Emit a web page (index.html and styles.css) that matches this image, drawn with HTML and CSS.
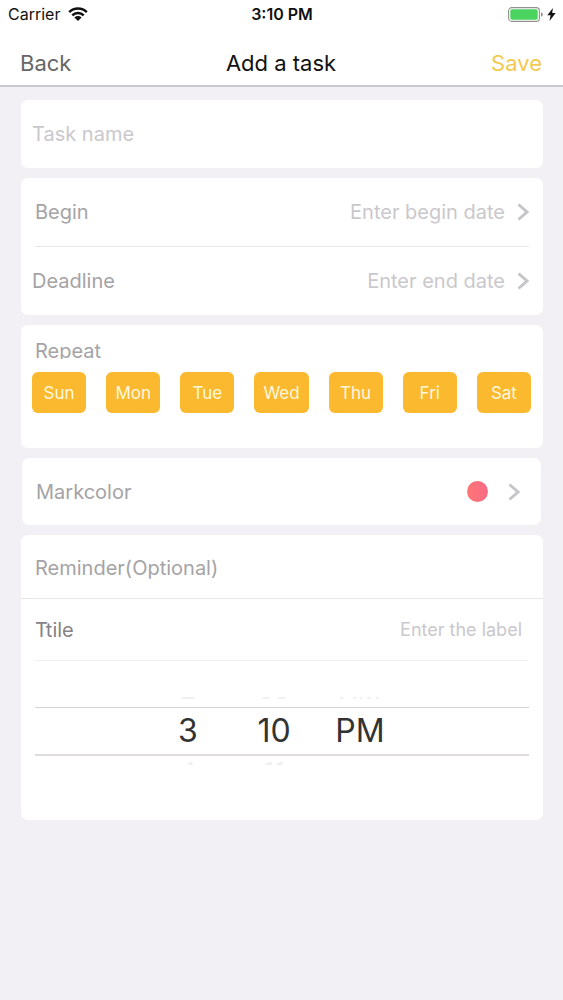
FILE: index.html
```html
<!DOCTYPE html>
<html lang="en">
<head>
<meta charset="utf-8">
<meta name="viewport" content="width=device-width, initial-scale=1">
<title>Add a task</title>
<link rel="stylesheet" href="styles.css">
</head>
<body>
<header class="top">
  <div class="status">
    <div class="carrier">
      <span>Carrier</span>
      <svg class="wifi" viewBox="0 0 20 14" aria-hidden="true">
        <path d="M1.2 5.2a12.4 12.4 0 0 1 17.6 0M4.3 8.4a8 8 0 0 1 11.4 0" fill="none" stroke="currentColor" stroke-width="2.5"/>
        <path d="M6.4 10.4a5.1 5.1 0 0 1 7.2 0L10 14z" fill="currentColor"/>
      </svg>
    </div>
    <time class="clock">3:10 PM</time>
    <div class="power">
      <svg class="battery" viewBox="0 0 36 15" aria-hidden="true">
        <rect x=".6" y=".6" width="30.8" height="13.8" rx="3.2" fill="#fff" stroke="#909290" stroke-width="1.1"/>
        <rect x="2.3" y="2.3" width="27.4" height="10.4" rx="1.6" fill="#4bd35f"/>
        <path d="M33 5.3q2 .7 2 2.2t-2 2.2z" fill="#909290"/>
      </svg>
      <svg class="bolt" viewBox="0 0 9 13" aria-hidden="true"><path d="M5.9 0L.3 7.2h3.3L2.5 13l6.2-7.9H5.2z" fill="currentColor"/></svg>
    </div>
  </div>
  <nav class="nav">
    <button class="nav-btn back" type="button">Back</button>
    <h1 class="title">Add a task</h1>
    <button class="nav-btn save" type="button">Save</button>
  </nav>
</header>

<main class="form">
  <section class="card">
    <div class="row row-wide">
      <input class="field field-name" type="text" placeholder="Task name" aria-label="Task name">
    </div>
  </section>

  <section class="card">
    <div class="row">
      <label class="label" for="begin">Begin</label>
      <input class="field field-end" id="begin" type="text" placeholder="Enter begin date" readonly>
      <svg class="chevron" viewBox="0 0 12 18" aria-hidden="true"><path d="M1.5 1.5L10 9l-8.5 7.5"/></svg>
    </div>
    <hr class="divider">
    <div class="row row-wide">
      <label class="label" for="deadline">Deadline</label>
      <input class="field field-end" id="deadline" type="text" placeholder="Enter end date" readonly>
      <svg class="chevron" viewBox="0 0 12 18" aria-hidden="true"><path d="M1.5 1.5L10 9l-8.5 7.5"/></svg>
    </div>
  </section>

  <section class="card repeat">
    <h2 class="label repeat-title">Repeat</h2>
    <div class="days">
      <button class="day" type="button" aria-pressed="true">Sun</button>
      <button class="day" type="button" aria-pressed="true">Mon</button>
      <button class="day" type="button" aria-pressed="true">Tue</button>
      <button class="day" type="button" aria-pressed="true">Wed</button>
      <button class="day" type="button" aria-pressed="true">Thu</button>
      <button class="day" type="button" aria-pressed="true">Fri</button>
      <button class="day" type="button" aria-pressed="true">Sat</button>
    </div>
  </section>

  <section class="card card-inset">
    <button class="row mark" type="button">
      <span class="label">Markcolor</span>
      <span class="dot"></span>
      <svg class="chevron" viewBox="0 0 12 18" aria-hidden="true"><path d="M1.5 1.5L10 9l-8.5 7.5"/></svg>
    </button>
  </section>

  <section class="card reminder">
    <h2 class="label reminder-title">Reminder(Optional)</h2>
    <div class="row reminder-row">
      <label class="label label-dark" for="tag">Ttile</label>
      <input class="field field-end field-small" id="tag" type="text" placeholder="Enter the label">
    </div>
    <hr class="divider divider-light">
    <div class="picker" role="group" aria-label="Reminder time">
      <div class="wheel wheel-prev" aria-hidden="true"><span>2</span><span>09</span><span>AM</span></div>
      <div class="wheel wheel-now"><span>3</span><span>10</span><span>PM</span></div>
      <div class="wheel wheel-next" aria-hidden="true"><span>4</span><span>11</span></div>
    </div>
  </section>
</main>
</body>
</html>
```
FILE: styles.css
```css
* {
  box-sizing: border-box;
}

body {
  margin: 0;
  min-height: 100vh;
  background: #f2f0f4;
  color: #111;
  font-family: Inter, Roboto, "Liberation Sans", sans-serif;
}

button,
input {
  margin: 0;
  padding: 0;
  border: 0;
  background: none;
  font: inherit;
}

h1,
h2 {
  margin: 0;
  font-weight: 400;
}

.top {
  background: #fff;
  border-bottom: 2px solid #cbc9cd;
}

.status {
  display: grid;
  grid-template-columns: 1fr auto 1fr;
  align-items: center;
  height: 28px;
  padding: 0 7px 0 8px;
  font-size: 16px;
}

.carrier,
.power {
  display: flex;
  align-items: center;
  gap: 8px;
}

.power {
  justify-content: flex-end;
  gap: 3px;
}

.wifi {
  width: 20px;
  height: 14px;
}

.battery {
  width: 36px;
  height: 15px;
}

.bolt {
  width: 9px;
  height: 13px;
}

.clock {
  font-weight: 600;
}

.nav {
  display: grid;
  grid-template-columns: 1fr auto 1fr;
  align-items: center;
  height: 57px;
  padding: 12px 21px 0 20px;
  font-size: 22px;
}

.nav-btn {
  justify-self: start;
  color: #666;
}

.nav-btn.save {
  justify-self: end;
  color: #f3c94f;
}

.title {
  font-size: 22px;
}

.form {
  display: flex;
  flex-direction: column;
  gap: 10px;
  padding: 13px 20px 20px 21px;
}

.card {
  background: #fff;
  border-radius: 7px;
}

.card-inset {
  margin: 0 2px 0 1px;
}

.row {
  display: flex;
  align-items: center;
  width: 100%;
  height: 68px;
  padding: 0 14px;
}

.row-wide {
  padding-left: 11px;
}

.label {
  color: #a5a3a6;
  font-size: 20px;
  line-height: 28px;
}

.label-dark {
  color: #858386;
}

.field {
  flex: 1;
  min-width: 0;
  color: #555;
  font-size: 20px;
  outline: 0;
}

.field::placeholder {
  color: #cac8cc;
  opacity: 1;
}

.field-end {
  text-align: right;
}

.field-small {
  font-size: 18px;
}

.chevron {
  flex: none;
  width: 12px;
  height: 18px;
  margin-left: 12px;
  fill: none;
  stroke: #c5c4c7;
  stroke-width: 3;
}

.divider {
  height: 1px;
  margin: 0 14px;
  border: 0;
  background: #e9e7ea;
}

.divider-light {
  background: #f1eff2;
}

.repeat {
  padding: 12px 12px 35px 11px;
}

.repeat-title {
  height: 22px;
  margin: 0 0 13px 3px;
  overflow: hidden;
}

.days {
  display: grid;
  grid-template-columns: repeat(7, 1fr);
  gap: 20px;
}

.day {
  height: 41px;
  border-radius: 6px;
  background: #fbb92f;
  color: #fff8dc;
  font-size: 17px;
}

.mark {
  height: 67px;
  padding-right: 21px;
}

.dot {
  width: 21px;
  height: 21px;
  margin: 0 8px 0 auto;
  border-radius: 50%;
  background: linear-gradient(90deg, #fd7575, #f76b86);
}

.reminder-title {
  padding: 19px 14px 16px;
  border-bottom: 1px solid #e9e5eb;
}

.reminder-row {
  height: 61px;
  padding-right: 21px;
}

.picker {
  padding: 36px 14px 55px;
}

.wheel {
  display: grid;
  grid-template-columns: 1fr repeat(3, 86px) 1fr;
  padding-right: 16px;
  text-align: center;
  font-size: 32px;
  line-height: 46px;
}

.wheel span:first-child {
  grid-column: 2;
}

.wheel-now {
  height: 49px;
  border-top: 1px solid #d6d3d8;
  border-bottom: 2px solid #dedce0;
  color: #333;
}

.wheel-prev,
.wheel-next {
  overflow: hidden;
  color: #f1eef3;
  font-size: 26px;
  line-height: 20px;
}

.wheel-prev {
  align-content: end;
  height: 3px;
  margin-bottom: 7px;
}

.wheel-next {
  height: 3px;
  margin-top: 6px;
}
```
